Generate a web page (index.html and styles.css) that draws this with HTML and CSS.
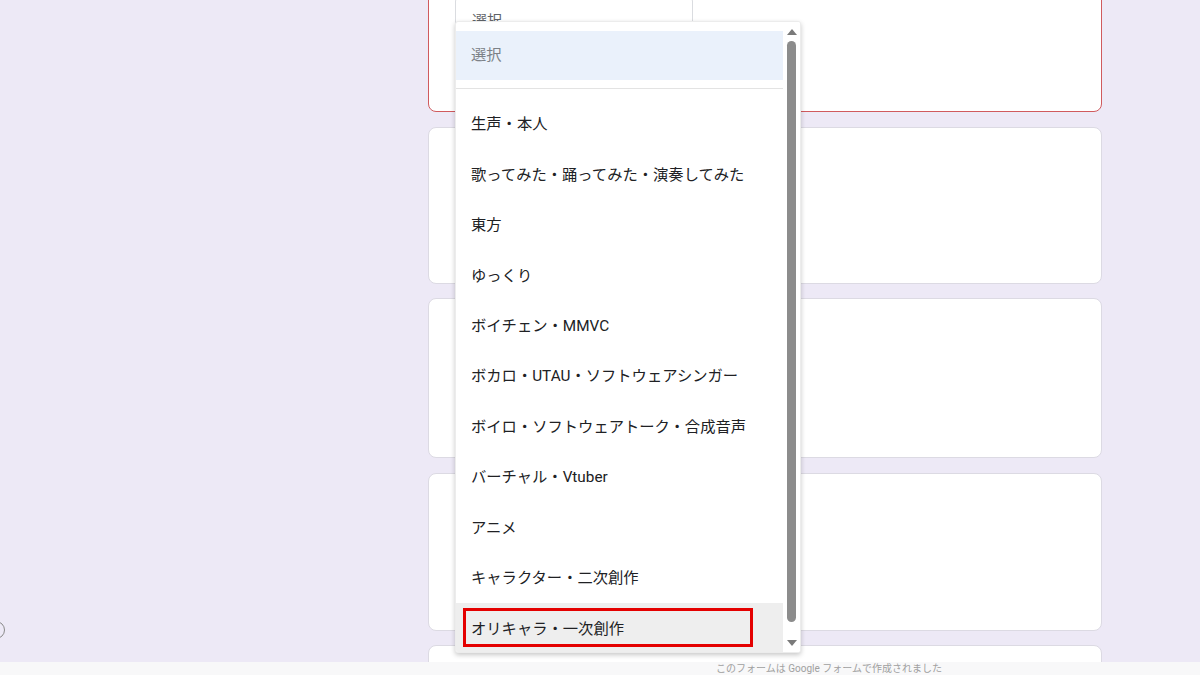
FILE: index.html
```html
<!DOCTYPE html>
<html lang="ja">
<head>
<meta charset="utf-8">
<title>フォーム</title>
<link rel="stylesheet" href="styles.css">
</head>
<body>
<div class="page">
  <main class="canvas">
    <div class="form">
      <section class="card card-error">
        <div class="select"><span class="select-text">選択</span></div>
      </section>
      <section class="card card-2"></section>
      <section class="card card-3"></section>
      <section class="card card-4"></section>
      <section class="card card-5"></section>
    </div>
    <span class="fab"></span>
    <div class="dropdown">
      <ul class="options">
        <li class="option placeholder">選択</li>
        <li class="separator"></li>
        <li class="option">生声・本人</li>
        <li class="option">歌ってみた・踊ってみた・演奏してみた</li>
        <li class="option">東方</li>
        <li class="option">ゆっくり</li>
        <li class="option">ボイチェン・MMVC</li>
        <li class="option">ボカロ・UTAU・ソフトウェアシンガー</li>
        <li class="option">ボイロ・ソフトウェアトーク・合成音声</li>
        <li class="option">バーチャル・Vtuber</li>
        <li class="option">アニメ</li>
        <li class="option">キャラクター・二次創作</li>
        <li class="option hover">オリキャラ・一次創作<span class="mark"></span></li>
      </ul>
      <div class="scrollbar">
        <span class="arrow up"></span>
        <span class="thumb"></span>
        <span class="arrow down"></span>
      </div>
    </div>
  </main>
  <footer class="footer"><span class="footer-text">このフォームは Google フォームで作成されました</span></footer>
</div>
</body>
</html>
```

FILE: styles.css
```css
* { box-sizing: border-box; }
html, body { margin: 0; padding: 0; }
body {
  font-family: Roboto, "Noto Sans CJK JP", "Noto Sans", sans-serif;
  color: #202124;
  background: #ede9f6;
  width: 1200px;
  height: 675px;
  overflow: hidden;
}
.page { display: flex; flex-direction: column; height: 675px; }
.canvas {
  position: relative;
  height: 662px;
  flex: none;
  overflow: hidden;
  background: #ede9f6;
}
.form {
  display: flex;
  flex-direction: column;
  gap: 14.5px;
  width: 674px;
  margin-left: 428px;
  margin-top: -30px;
}
.card {
  background: #fff;
  border: 1px solid #dcdae3;
  border-radius: 8px;
  flex: none;
}
.card-error { height: 142px; border-color: #d05a5e; padding: 26px 0 0 26px; }
.card-2 { height: 157px; }
.card-3 { height: 160px; }
.card-4 { height: 158px; }
.card-5 { height: 80px; }
.select {
  width: 238px;
  height: 70px;
  border: 1px solid #dadce0;
  border-radius: 4px;
  padding: 11px 16px;
  font-size: 15px;
  line-height: 24px;
  color: #5f6368;
}
.fab {
  position: absolute;
  left: -13px;
  top: 621px;
  width: 18px;
  height: 18px;
  border: 1.5px solid #8a8a8a;
  border-radius: 50%;
}
.dropdown {
  position: absolute;
  left: 455px;
  top: 21px;
  width: 346px;
  height: 632px;
  background: #fff;
  border: 1px solid #ececec;
  border-radius: 3px;
  box-shadow: 0 2px 5px rgba(0,0,0,.22);
  display: flex;
  overflow: hidden;
}
.options {
  list-style: none;
  margin: 0;
  padding: 9px 0 0;
  flex: 1;
  min-width: 0;
}
.option {
  position: relative;
  height: 50.45px;
  display: flex;
  align-items: center;
  padding-left: 15px;
  padding-bottom: 4px;
  font-size: 15.3px;
  color: #202124;
  white-space: nowrap;
}
.placeholder {
  height: 49px;
  padding-bottom: 5px;
  background: #eaf1fb;
  color: #7c8187;
}
.separator {
  height: 1px;
  background: #e3e3e3;
  margin: 8px 0 10px;
}
.hover { background: #eeeeee; }
.mark {
  position: absolute;
  left: 7px;
  top: 4.5px;
  width: 290px;
  height: 39px;
  border: 3px solid #e40000;
}
.scrollbar {
  width: 17px;
  flex: none;
  display: flex;
  flex-direction: column;
  align-items: center;
  padding-top: 7px;
  background: #fff;
}
.arrow {
  width: 0;
  height: 0;
  border-left: 5px solid transparent;
  border-right: 5px solid transparent;
}
.arrow.up { border-bottom: 6px solid #7a7a7a; }
.arrow.down { border-top: 6px solid #7a7a7a; margin-top: 18px; }
.thumb {
  width: 9px;
  height: 581px;
  margin-top: 6px;
  background: #8c8c8c;
  border-radius: 5px;
  flex: none;
}
.footer {
  height: 13px;
  flex: none;
  background: #f8f8f9;
  overflow: hidden;
  padding-left: 716px;
  padding-top: 1px;
}
.footer-text {
  display: block;
  font-size: 10px;
  line-height: 12px;
  color: #a0a0a0;
  white-space: nowrap;
}
```
